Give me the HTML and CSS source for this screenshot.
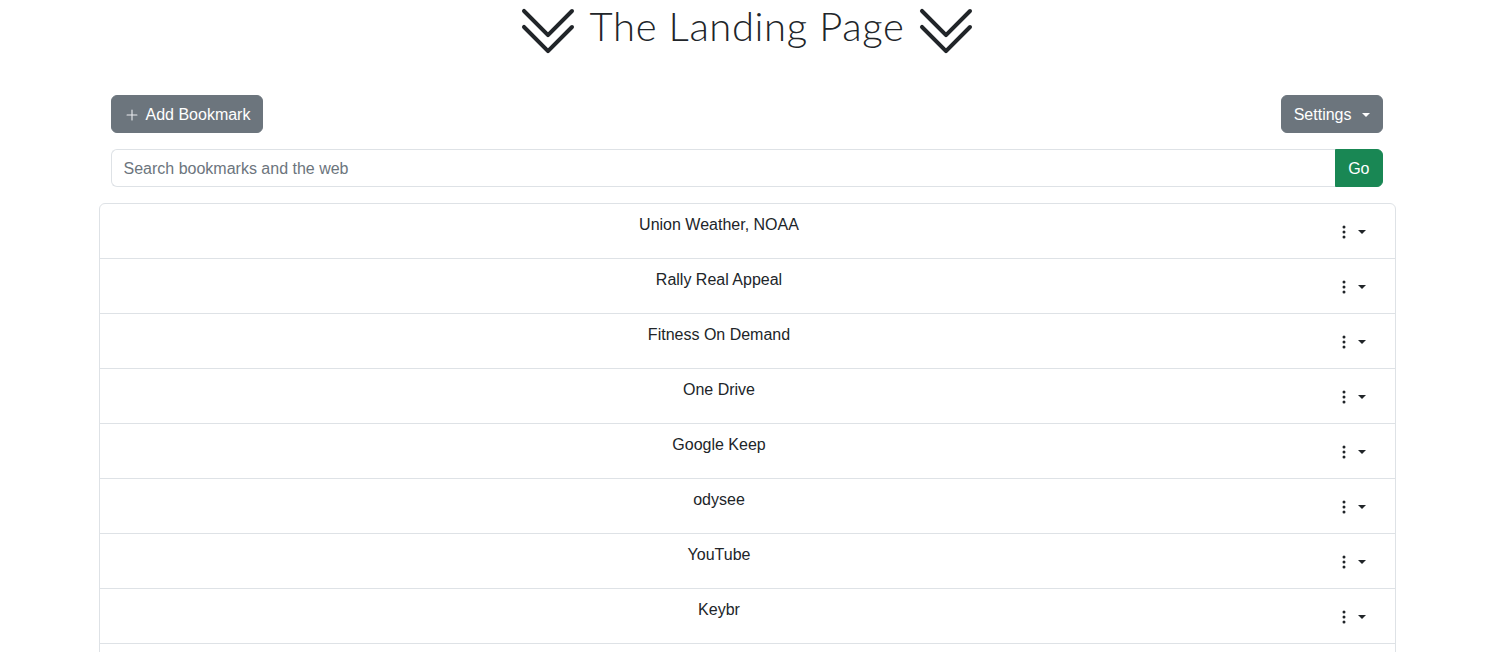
FILE: index.html
```html
<!DOCTYPE html>
<html lang="en">
<head>
<meta charset="utf-8">
<title>The Landing Page</title>
<link rel="stylesheet" href="styles.css">
</head>
<body>
<header class="title">
  <svg class="chev" viewBox="0 0 16 16" fill="currentColor"><path fill-rule="evenodd" d="M1.646 6.646a.5.5 0 0 1 .708 0L8 12.293l5.646-5.647a.5.5 0 0 1 .708.708l-6 6a.5.5 0 0 1-.708 0l-6-6a.5.5 0 0 1 0-.708z"/><path fill-rule="evenodd" d="M1.646 2.646a.5.5 0 0 1 .708 0L8 8.293l5.646-5.647a.5.5 0 0 1 .708.708l-6 6a.5.5 0 0 1-.708 0l-6-6a.5.5 0 0 1 0-.708z"/></svg>
  <h1 class="title-text">The Landing Page</h1>
  <svg class="chev" viewBox="0 0 16 16" fill="currentColor"><path fill-rule="evenodd" d="M1.646 6.646a.5.5 0 0 1 .708 0L8 12.293l5.646-5.647a.5.5 0 0 1 .708.708l-6 6a.5.5 0 0 1-.708 0l-6-6a.5.5 0 0 1 0-.708z"/><path fill-rule="evenodd" d="M1.646 2.646a.5.5 0 0 1 .708 0L8 8.293l5.646-5.647a.5.5 0 0 1 .708.708l-6 6a.5.5 0 0 1-.708 0l-6-6a.5.5 0 0 1 0-.708z"/></svg>
</header>
<main class="container">
  <div class="controls">
    <div class="toolbar">
      <button class="btn btn-secondary"><svg class="plus" viewBox="0 0 16 16" fill="currentColor"><path d="M8 4a.4.4 0 0 1 .4.4v3.2h3.2a.4.4 0 0 1 0 .8H8.4v3.2a.4.4 0 0 1-.8 0V8.4H4.4a.4.4 0 0 1 0-.8h3.2V4.4A.4.4 0 0 1 8 4z"/></svg>Add Bookmark</button>
      <button class="btn btn-secondary">Settings<span class="caret caret-settings"></span></button>
    </div>
    <form class="search">
      <input class="search-input" type="text" placeholder="Search bookmarks and the web">
      <button class="btn btn-go" type="button">Go</button>
    </form>
  </div>
  <ul class="list">
    <li class="item"><span class="name">Union Weather, NOAA</span><button class="kebab"><svg viewBox="0 0 16 16" fill="currentColor"><path d="M9.5 13a1.5 1.5 0 1 1-3 0 1.5 1.5 0 0 1 3 0m0-5a1.5 1.5 0 1 1-3 0 1.5 1.5 0 0 1 3 0m0-5a1.5 1.5 0 1 1-3 0 1.5 1.5 0 0 1 3 0"/></svg><span class="caret"></span></button></li>
    <li class="item"><span class="name">Rally Real Appeal</span><button class="kebab"><svg viewBox="0 0 16 16" fill="currentColor"><path d="M9.5 13a1.5 1.5 0 1 1-3 0 1.5 1.5 0 0 1 3 0m0-5a1.5 1.5 0 1 1-3 0 1.5 1.5 0 0 1 3 0m0-5a1.5 1.5 0 1 1-3 0 1.5 1.5 0 0 1 3 0"/></svg><span class="caret"></span></button></li>
    <li class="item"><span class="name">Fitness On Demand</span><button class="kebab"><svg viewBox="0 0 16 16" fill="currentColor"><path d="M9.5 13a1.5 1.5 0 1 1-3 0 1.5 1.5 0 0 1 3 0m0-5a1.5 1.5 0 1 1-3 0 1.5 1.5 0 0 1 3 0m0-5a1.5 1.5 0 1 1-3 0 1.5 1.5 0 0 1 3 0"/></svg><span class="caret"></span></button></li>
    <li class="item"><span class="name">One Drive</span><button class="kebab"><svg viewBox="0 0 16 16" fill="currentColor"><path d="M9.5 13a1.5 1.5 0 1 1-3 0 1.5 1.5 0 0 1 3 0m0-5a1.5 1.5 0 1 1-3 0 1.5 1.5 0 0 1 3 0m0-5a1.5 1.5 0 1 1-3 0 1.5 1.5 0 0 1 3 0"/></svg><span class="caret"></span></button></li>
    <li class="item"><span class="name">Google Keep</span><button class="kebab"><svg viewBox="0 0 16 16" fill="currentColor"><path d="M9.5 13a1.5 1.5 0 1 1-3 0 1.5 1.5 0 0 1 3 0m0-5a1.5 1.5 0 1 1-3 0 1.5 1.5 0 0 1 3 0m0-5a1.5 1.5 0 1 1-3 0 1.5 1.5 0 0 1 3 0"/></svg><span class="caret"></span></button></li>
    <li class="item"><span class="name">odysee</span><button class="kebab"><svg viewBox="0 0 16 16" fill="currentColor"><path d="M9.5 13a1.5 1.5 0 1 1-3 0 1.5 1.5 0 0 1 3 0m0-5a1.5 1.5 0 1 1-3 0 1.5 1.5 0 0 1 3 0m0-5a1.5 1.5 0 1 1-3 0 1.5 1.5 0 0 1 3 0"/></svg><span class="caret"></span></button></li>
    <li class="item"><span class="name">YouTube</span><button class="kebab"><svg viewBox="0 0 16 16" fill="currentColor"><path d="M9.5 13a1.5 1.5 0 1 1-3 0 1.5 1.5 0 0 1 3 0m0-5a1.5 1.5 0 1 1-3 0 1.5 1.5 0 0 1 3 0m0-5a1.5 1.5 0 1 1-3 0 1.5 1.5 0 0 1 3 0"/></svg><span class="caret"></span></button></li>
    <li class="item"><span class="name">Keybr</span><button class="kebab"><svg viewBox="0 0 16 16" fill="currentColor"><path d="M9.5 13a1.5 1.5 0 1 1-3 0 1.5 1.5 0 0 1 3 0m0-5a1.5 1.5 0 1 1-3 0 1.5 1.5 0 0 1 3 0m0-5a1.5 1.5 0 1 1-3 0 1.5 1.5 0 0 1 3 0"/></svg><span class="caret"></span></button></li>
    <li class="item"><span class="name"></span><button class="kebab"><svg viewBox="0 0 16 16" fill="currentColor"><path d="M9.5 13a1.5 1.5 0 1 1-3 0 1.5 1.5 0 0 1 3 0m0-5a1.5 1.5 0 1 1-3 0 1.5 1.5 0 0 1 3 0m0-5a1.5 1.5 0 1 1-3 0 1.5 1.5 0 0 1 3 0"/></svg><span class="caret"></span></button></li>
  </ul>
</main>
</body>
</html>
```

FILE: styles.css
```css
* { box-sizing: border-box; }

body {
  margin: 0;
  padding-right: 3px;
  font-family: "Liberation Sans", Arial, sans-serif;
  font-size: 16px;
  line-height: 1.5;
  color: #212529;
  background: #fff;
}

.title {
  display: flex;
  justify-content: center;
  align-items: flex-start;
  gap: 10px;
  height: 64px;
  color: #212529;
}

.chev {
  width: 64px;
  height: 64px;
  flex: none;
  margin-top: -1px;
}

.title-text {
  margin: 2px 0 0;
  font-family: "Lato", "Liberation Sans", sans-serif;
  font-weight: 300;
  font-size: 40px;
  line-height: 48px;
  letter-spacing: 0.6px;
}

.container {
  width: 1297px;
  margin: 31px auto 0;
}

.controls {
  padding: 0 13px 0 12px;
}

.toolbar {
  display: flex;
  justify-content: space-between;
  margin-bottom: 16px;
}

.btn {
  font-family: inherit;
  font-size: 16px;
  line-height: 24px;
  padding: 7px 12px 5px;
  border: 1px solid transparent;
  border-radius: 6px;
  color: #fff;
  display: inline-flex;
  align-items: center;
  cursor: pointer;
}

.btn-secondary {
  background: #6c757d;
  border-color: #6c757d;
}

.plus {
  width: 22px;
  height: 22px;
  margin-left: -3px;
  margin-right: 3px;
  color: #e9ecef;
}

.caret {
  display: inline-block;
  margin-left: 4px;
  width: 0;
  height: 0;
  border-top: 4px solid currentColor;
  border-left: 4px solid transparent;
  border-right: 4px solid transparent;
}

.caret-settings {
  margin-left: 10px;
}

.search {
  display: flex;
  margin: 0 0 16px;
}

.search-input {
  flex: 1;
  font-family: inherit;
  font-size: 16px;
  line-height: 24px;
  padding: 7px 12px 5px;
  border: 1px solid #dee2e6;
  border-right: none;
  border-radius: 6px 0 0 6px;
  color: #212529;
  outline: none;
}

.search-input::placeholder {
  color: #6c757d;
}

.btn-go {
  background: #198754;
  border-color: #198754;
  border-radius: 0 6px 6px 0;
}

.list {
  list-style: none;
  margin: 0;
  padding: 0;
  border: 1px solid #dee2e6;
  border-radius: 6px;
}

.item {
  display: flex;
  align-items: flex-start;
  padding: 8px 16px;
  border-top: 1px solid #dee2e6;
}

.item:first-child {
  border-top: none;
}

.name {
  flex: 1;
  text-align: center;
  line-height: 24px;
  padding-top: 1px;
}

.kebab {
  display: inline-flex;
  align-items: center;
  background: transparent;
  border: 1px solid transparent;
  padding: 7px 12px 5px;
  line-height: 24px;
  height: 38px;
  color: #212529;
  font-size: 16px;
  cursor: pointer;
}

.kebab svg {
  width: 16px;
  height: 16px;
}

.kebab .caret {
  margin-left: 6px;
}
```
